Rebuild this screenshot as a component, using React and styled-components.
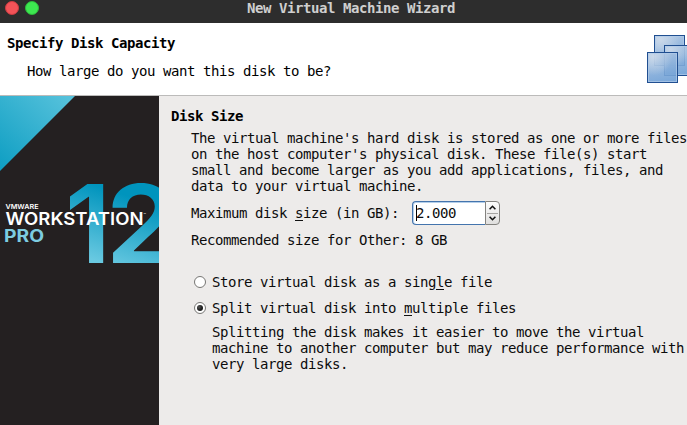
import React from "react";
import styled, { createGlobalStyle } from "styled-components";

const GlobalStyle = createGlobalStyle`
  * { box-sizing: border-box; }
  body { margin: 0; overflow: hidden; background: #edebea; }
`;

const Window = styled.div`
  width: 687px;
  height: 425px;
  overflow: hidden;
  display: flex;
  flex-direction: column;
  background: #edebea;
  color: #0c0c0c;
  font: 14px/16px "DejaVu Sans Mono", monospace;
  letter-spacing: -0.428px;
  white-space: pre;
`;

const TitleBar = styled.header`
  flex: none;
  height: 23px;
  display: grid;
  grid-template-columns: 247px 1fr;
  background: #2d2d2d;
`;

const Controls = styled.div`
  display: flex;
  gap: 6px;
  padding: 1px 0 0 5px;
`;

const Control = styled.span`
  width: 14px;
  height: 14px;
  border-radius: 50%;
  background: ${(p) => p.$color};
  border: 1px solid ${(p) => p.$edge};
`;

const Title = styled.div`
  color: #cfcfcf;
  font-weight: bold;
`;

const Banner = styled.section`
  flex: none;
  height: 73px;
  display: flex;
  justify-content: space-between;
  background: #fff;
  border-bottom: 1px solid #bcbbba;
  color: #000;
`;

const BannerText = styled.div`
  padding: 12px 0 0 7px;
`;

const Heading = styled.h1`
  margin: 0;
  font-size: inherit;
  line-height: 16px;
  font-weight: bold;
  color: #000;
`;

const Question = styled.p`
  margin: 12px 0 0 20px;
`;

const BannerIcon = styled.svg`
  flex: none;
  margin-top: 12px;
  width: 40px;
  height: 48px;
`;

const Body = styled.div`
  flex: 1;
  display: flex;
`;

const SideArt = styled.svg`
  flex: none;
  width: 159px;
  height: 329px;
`;

const Content = styled.main`
  flex: none;
  width: 528px;
  padding: 12px 0 0 12px;
`;

const Section = styled.div`
  padding-left: 20px;
`;

const Paragraph = styled.p`
  margin: ${(p) => p.$top}px 0 0 ${(p) => p.$indent || 0}px;
`;

const SizeRow = styled.label`
  display: flex;
  align-items: center;
  gap: 13px;
  height: 24px;
  margin-top: 7px;
`;

const Key = styled.span`
  border-bottom: 1px solid #111;
  display: inline-block;
  height: 16px;
  line-height: 16px;
  vertical-align: top;
`;

const SpinBox = styled.span`
  width: 88px;
  height: 24px;
  display: flex;
`;

const Value = styled.span`
  flex: 1;
  padding-left: 3px;
  display: flex;
  align-items: center;
  background: #fff;
  border: 1px solid #4474ad;
  border-right: 0;
  border-radius: 4px 0 0 4px;
  box-shadow: inset 0 1px 0 #b5cfea, inset 1px 0 0 #b5cfea;
`;

const Caret = styled.span`
  width: 1px;
  height: 16px;
  margin-right: -1px;
  background: #000;
`;

const Steppers = styled.span`
  width: 15px;
  display: flex;
  flex-direction: column;
  padding: 0 1px;
  border: 1px solid #83827f;
  border-radius: 0 4px 4px 0;
  background: linear-gradient(#fcfcfc, #e0dfde);
`;

const Step = styled.span`
  flex: 1;
  display: flex;
  align-items: center;
  justify-content: center;
  & + & { border-top: 1px solid #a5a4a2; }
`;

const Chevron = styled.svg`
  width: 7px;
  height: 5px;
  transform: ${(p) => (p.$down ? "scaleY(-1)" : "none")};
`;

const Option = styled.label`
  display: flex;
  align-items: center;
  gap: 6px;
  height: 16px;
  margin: ${(p) => p.$top}px 0 0 3px;
`;

const Radio = styled.span`
  width: 12px;
  height: 12px;
  border-radius: 50%;
  border: 1px solid #777674;
  display: grid;
  place-items: center;
  background: #fff;
  &::after {
    content: "";
    width: 6px;
    height: 6px;
    border-radius: 50%;
    background: ${(p) => (p.$on ? "radial-gradient(circle at 35% 35%, #555, #1c1c1c 55%)" : "transparent")};
  }
`;

function MachinesIcon() {
  const squares = [[7, 0], [17, 10], [0, 17]];
  return (
    <BannerIcon viewBox="0 0 40 48">
      <defs>
        <linearGradient id="pane" x1="0.3" y1="0" x2="0.5" y2="1">
          <stop offset="0" stopColor="#a6c1e0" />
          <stop offset="1" stopColor="#6c9ed5" />
        </linearGradient>
        <radialGradient id="shine" cx="0.22" cy="0.15" r="0.6">
          <stop offset="0" stopColor="#d6e0ec" stopOpacity="0.75" />
          <stop offset="1" stopColor="#d6e0ec" stopOpacity="0" />
        </radialGradient>
      </defs>
      {squares.map(([x, y]) => (
        <g key={x}>
          <rect x={x} y={y} width="31" height="31" fill="url(#pane)" fillOpacity="0.9" />
          <rect x={x} y={y} width="31" height="31" fill="url(#shine)" />
          <rect x={x + 1.5} y={y + 1.5} width="28" height="28" fill="none" stroke="#b0cbe8" strokeOpacity="0.7" />
          <rect x={x + 0.5} y={y + 0.5} width="30" height="30" fill="none" stroke="#204f91" />
        </g>
      ))}
    </BannerIcon>
  );
}

function BrandArt() {
  return (
    <SideArt viewBox="0 0 159 329">
      <defs>
        <linearGradient id="corner" gradientUnits="userSpaceOnUse" x1="65" y1="0" x2="0" y2="70">
          <stop offset="0" stopColor="#55c1db" />
          <stop offset="1" stopColor="#109fc3" />
        </linearGradient>
        <linearGradient id="number" gradientUnits="userSpaceOnUse" x1="128" y1="100" x2="105" y2="168">
          <stop offset="0" stopColor="#0094bd" />
          <stop offset="1" stopColor="#69c9e1" />
        </linearGradient>
      </defs>
      <rect width="159" height="329" fill="#242021" />
      <path d="M0 0H75L0 75Z" fill="url(#corner)" />
      <g fontFamily="Inter, sans-serif" letterSpacing="0">
        <g fill="url(#number)" fontSize="109" fontWeight="600">
          <text x="65" y="167">1</text>
          <text x="105.5" y="167" textLength="72" lengthAdjust="spacingAndGlyphs">2</text>
        </g>
        <g fill="#fff">
          <text x="5.5" y="113" fontSize="6.8" fontWeight="600" textLength="33" lengthAdjust="spacingAndGlyphs">VMWARE</text>
          <text x="5.5" y="129" fontSize="17.2" fontWeight="600" textLength="138" lengthAdjust="spacingAndGlyphs">WORKSTATION</text>
          <text x="143.5" y="120" fontSize="4">™</text>
        </g>
        <text x="4" y="146" fill="#7dcce0" fontSize="17" fontWeight="700" textLength="40" lengthAdjust="spacingAndGlyphs">PRO</text>
      </g>
    </SideArt>
  );
}

export default function App() {
  return (
    <>
      <GlobalStyle />
      <Window>
        <TitleBar>
          <Controls>
            <Control $color="#f35358" $edge="#cc3c42" />
            <Control $color="#3de750" $edge="#2cba3b" />
          </Controls>
          <Title>New Virtual Machine Wizard</Title>
        </TitleBar>
        <Banner>
          <BannerText>
            <Heading>Specify Disk Capacity</Heading>
            <Question>How large do you want this disk to be?</Question>
          </BannerText>
          <MachinesIcon />
        </Banner>
        <Body>
          <BrandArt />
          <Content>
            <Heading as="h2">Disk Size</Heading>
            <Section>
              <Paragraph $top={6}>
                {"The virtual machine's hard disk is stored as one or more files\non the host computer's physical disk. These file(s) start\nsmall and become larger as you add applications, files, and\ndata to your virtual machine."}
              </Paragraph>
              <SizeRow>
                <span>Maximum disk <Key>s</Key>ize (in GB):</span>
                <SpinBox>
                  <Value><Caret />2.000</Value>
                  <Steppers>
                    {[false, true].map((down) => (
                      <Step key={String(down)}>
                        <Chevron $down={down} viewBox="0 0 7 5">
                          <path d="M0.6 4.2L3.5 1.3L6.4 4.2" fill="none" stroke="#111" strokeWidth="1.6" />
                        </Chevron>
                      </Step>
                    ))}
                  </Steppers>
                </SpinBox>
              </SizeRow>
              <Paragraph $top={7}>Recommended size for Other: 8 GB</Paragraph>
              <Option $top={26}>
                <Radio />
                <span>Store virtual disk as a sing<Key>l</Key>e file</span>
              </Option>
              <Option $top={10}>
                <Radio $on />
                <span>Split virtual disk into <Key>m</Key>ultiple files</span>
              </Option>
              <Paragraph $top={8} $indent={21}>
                {"Splitting the disk makes it easier to move the virtual\nmachine to another computer but may reduce performance with\nvery large disks."}
              </Paragraph>
            </Section>
          </Content>
        </Body>
      </Window>
    </>
  );
}
